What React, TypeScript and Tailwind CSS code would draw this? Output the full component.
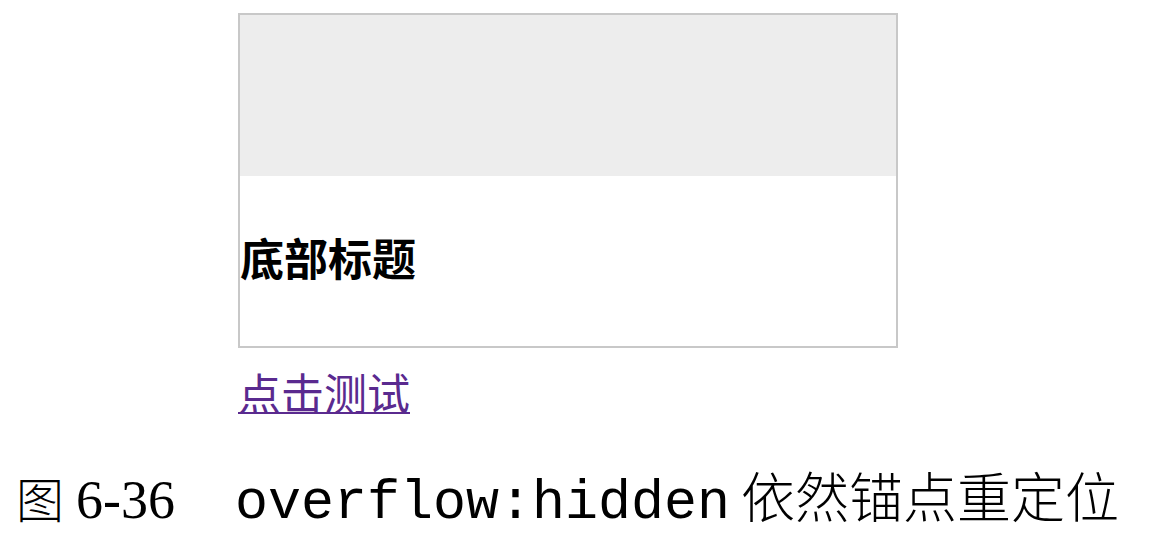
export default function App() {
    return (
        <div className="w-[1154px] h-[540px] bg-white overflow-hidden">
            <div className="pl-[238px] pt-[13px] font-['Noto_Sans_CJK_SC',sans-serif]">
                <div className="w-[660px] h-[335px] border-2 border-[#c8c8c8] overflow-hidden">
                    <div className="h-[161px] bg-[#ededed]" />
                    <h3 className="mt-[53px] text-[44px] leading-[56px] font-bold text-black">
                        底部标题
                    </h3>
                </div>
                <a
                    href="#"
                    className="block w-fit mt-[16px] text-[43px] leading-[54px] text-[#5a2a8f] underline decoration-2 underline-offset-[2px]"
                >
                    点击测试
                </a>
            </div>
            <div className="mt-[36px] pl-[16px] flex items-baseline text-black">
                <span className="text-[48px] font-light font-['Noto_Sans_CJK_SC',sans-serif]">图</span>
                <span className="ml-[12px] text-[54px] font-['Liberation_Serif',serif]">6-36</span>
                <span className="ml-[60px] text-[55px] font-['Liberation_Mono',monospace]">overflow:hidden</span>
                <span className="ml-[11px] text-[54px] font-light font-['Noto_Sans_CJK_SC',sans-serif]">依然锚点重定位</span>
            </div>
        </div>
    )
}
